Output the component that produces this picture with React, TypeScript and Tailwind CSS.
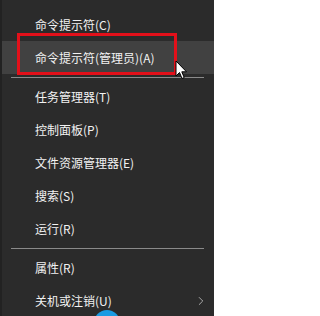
import { ChevronRight } from 'lucide-react';

type Item = { label: string; sub?: boolean; active?: boolean } | 'sep';

const items: Item[] = [
  { label: '命令提示符(C)' },
  { label: '命令提示符(管理员)(A)', active: true },
  'sep',
  { label: '任务管理器(T)' },
  { label: '控制面板(P)' },
  { label: '文件资源管理器(E)' },
  { label: '搜索(S)' },
  { label: '运行(R)' },
  'sep',
  { label: '属性(R)' },
  { label: '关机或注销(U)', sub: true },
];

export default function App() {
  return (
    <div
      className="relative w-[214px] h-[316px] overflow-hidden bg-[#2b2b2b] border-l-2 border-[#222] pt-[8px]"
      style={{ fontFamily: '"Noto Sans CJK SC", "Noto Sans", sans-serif' }}
    >
      {items.map((it, i) =>
        it === 'sep' ? (
          <div key={i} className="h-[6px] flex items-center pl-[9px] pr-[10px]">
            <div className="h-px w-full bg-[#8a8a8a]" />
          </div>
        ) : (
          <div
            key={i}
            className={`h-[33px] flex items-center justify-between pl-[33px] pr-[6px] text-[12px] text-[#f2f2f2] ${it.active ? 'bg-[#414141]' : ''}`}
          >
            <span>{it.label}</span>
            {it.sub && <ChevronRight className="w-[14px] h-[14px] text-[#cfcfcf]" strokeWidth={1.3} />}
          </div>
        )
      )}

      {/* red annotation box */}
      <div className="absolute left-[15px] top-[33px] w-[160px] h-[42px] border-[3px] border-[#e3101a]" />

      {/* mouse cursor */}
      <svg className="absolute left-[173px] top-[60px]" width="13" height="20" viewBox="0 0 13 20">
        <path d="M1 1 L1 16 L4.5 12.5 L7 18.5 L9.2 17.5 L6.8 11.8 L11.5 11.8 Z" fill="#fff" stroke="#000" strokeWidth="1" />
      </svg>

      {/* blue circle peeking at bottom */}
      <div className="absolute left-[92px] top-[310px] w-[26px] h-[26px] rounded-full bg-[#1a9be3]" />
    </div>
  );
}
